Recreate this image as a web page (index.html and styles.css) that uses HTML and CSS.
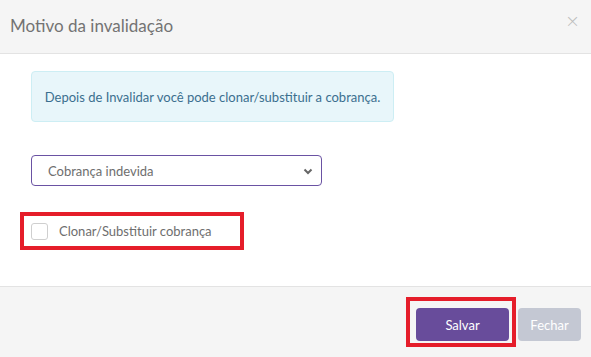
FILE: index.html
```html
<!DOCTYPE html>
<html lang="pt-BR">
<head>
<meta charset="UTF-8" />
<meta name="viewport" content="width=device-width, initial-scale=1.0" />
<title>Motivo da invalidação</title>
<link rel="stylesheet" href="styles.css">
</head>

<body>
    <div class="modal">
        <div class="modal-header">
            <h4 class="modal-title">Motivo da invalidação</h4>
            <button class="close" aria-label="Fechar">&times;</button>
        </div>

        <div class="modal-body">
            <div class="alert-info">
                Depois de Invalidar você pode clonar/substituir a cobrança.
            </div>

            <div class="select-wrap">
                <select class="form-select">
                    <option>Cobrança indevida</option>
                </select>
                <svg class="select-arrow" width="10" height="7" viewBox="0 0 10 7">
                    <path d="M1.5 1.5 L5 5 L8.5 1.5" fill="none" stroke="#666" stroke-width="2" />
                </svg>
            </div>

            <div class="highlight check-highlight">
                <label class="check-row">
                    <span class="checkbox"></span>
                    Clonar/Substituir cobrança
                </label>
            </div>
        </div>

        <div class="modal-footer">
            <div class="highlight save-highlight">
                <button class="btn btn-primary">Salvar</button>
            </div>
            <button class="btn btn-disabled">Fechar</button>
        </div>
    </div>
</body>

</html>
```

FILE: styles.css
```css
body {
    margin: 0;
    font-family: Lato, "Open Sans", sans-serif;
    background-color: #fff;
    overflow: hidden;
}

.modal {
    width: 591px;
    height: 357px;
    display: flex;
    flex-direction: column;
}

.modal-header {
    height: 53px;
    background-color: #f5f5f5;
    border-bottom: 1px solid #e3e3e3;
    display: flex;
    align-items: center;
    justify-content: space-between;
    padding: 0 11px 0 10px;
    box-sizing: content-box;
}

.modal-title {
    margin: 0;
    font-weight: normal;
    font-size: 17px;
    color: #737373;
    padding-bottom: 2px;
}

.close {
    background: none;
    border: none;
    padding: 0;
    font-size: 18px;
    line-height: 1;
    color: #bdbdbd;
    cursor: pointer;
    margin-bottom: 11px;
    font-family: "DejaVu Sans", sans-serif;
    font-weight: 300;
}

.modal-body {
    flex: 1;
    padding: 17px 20px 0 20px;
    display: flex;
    flex-direction: column;
    align-items: flex-start;
}

.alert-info {
    margin-left: 11px;
    width: 361px;
    height: 49px;
    background-color: #e8f6fa;
    border: 1px solid #cdeef4;
    border-radius: 4px;
    display: flex;
    align-items: center;
    justify-content: center;
    font-size: 13px;
    color: #3b6f8f;
}

.select-wrap {
    position: relative;
    margin: 33px 0 0 11px;
}

.form-select {
    appearance: none;
    width: 291px;
    height: 31px;
    border: 1px solid #6a52a3;
    border-radius: 4px;
    background-color: #fff;
    padding: 0 0 0 16px;
    font-family: Lato, "Open Sans", sans-serif;
    font-size: 13px;
    color: #6e6e6e;
}

.select-arrow {
    position: absolute;
    right: 9px;
    top: 13px;
}

.highlight {
    border: 4px solid #e51d2a;
}

.check-highlight {
    margin-top: 26px;
    width: 209px;
    height: 30px;
    display: flex;
    align-items: center;
    padding-left: 7px;
    box-sizing: content-box;
}

.check-row {
    display: flex;
    align-items: center;
    gap: 11px;
    font-size: 13px;
    color: #6e6e6e;
}

.checkbox {
    width: 15px;
    height: 15px;
    border: 1px solid #cfcfcf;
    border-radius: 3px;
    background: #fff;
}

.modal-footer {
    height: 71px;
    background-color: #f5f5f5;
    border-top: 1px solid #e3e3e3;
    display: flex;
    align-items: flex-start;
    justify-content: flex-end;
    padding: 10px 10px 0 0;
    box-sizing: border-box;
    gap: 2px;
}

.save-highlight {
    padding: 7px 3px 2px 6px;
}

.btn {
    border: none;
    border-radius: 4px;
    height: 33px;
    font-family: Lato, "Open Sans", sans-serif;
    font-size: 13px;
    color: #fff;
    cursor: pointer;
}

.btn-primary {
    width: 93px;
    background-color: #684c9b;
}

.btn-disabled {
    margin-top: 11px;
    width: 63px;
    background-color: #c4c8d3;
}
```
